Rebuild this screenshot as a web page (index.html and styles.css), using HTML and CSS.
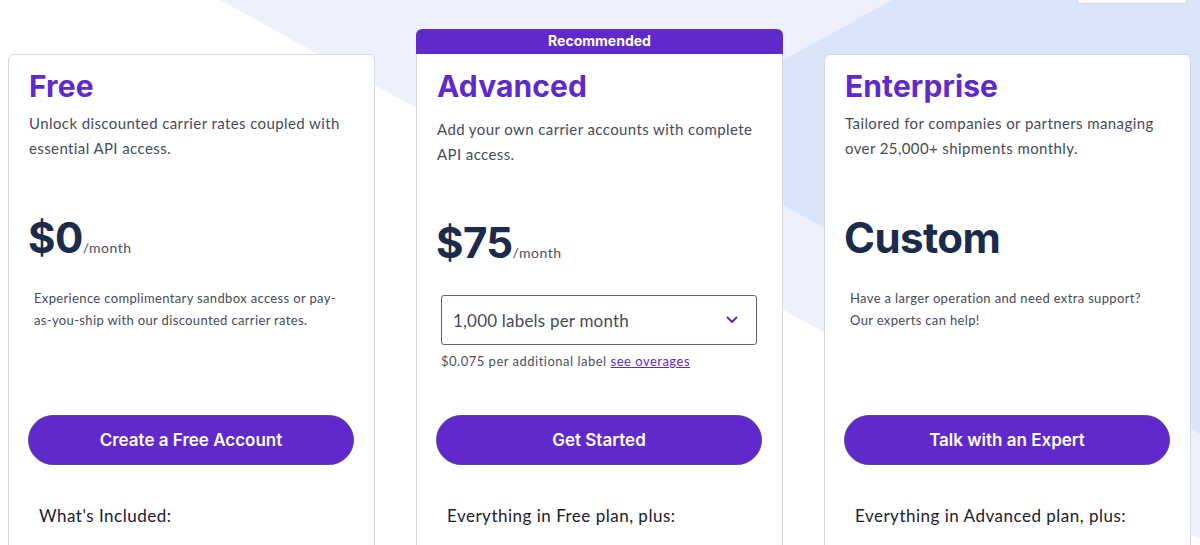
FILE: index.html
```html
<!DOCTYPE html>
<html lang="en">

<head>
    <meta charset="UTF-8">
    <meta name="viewport" content="width=device-width, initial-scale=1.0">
    <title>Pricing</title>
    <link rel="stylesheet" href="styles.css">
</head>

<body>
    <div class="page">
        <!-- Decorative background shapes -->
        <svg class="backdrop" viewBox="0 0 1200 545" preserveAspectRatio="none" aria-hidden="true">
            <polygon points="220,0 1200,0 1200,539" fill="#eef1fc" />
            <polygon points="651,133 892,0 1200,0 1200,434" fill="#dbe5fa" />
        </svg>

        <div class="topbar">
            <div class="topbar-box"></div>
        </div>

        <div class="plans">
            <!-- Free -->
            <div class="plan">
                <div class="plan-card">
                    <h2 class="plan-name">Free</h2>
                    <p class="plan-desc">Unlock discounted carrier rates coupled with essential API access.</p>
                    <div class="plan-price">
                        <span class="amount">$0</span><span class="period">/month</span>
                    </div>
                    <div class="plan-details">
                        <p class="plan-note">Experience complimentary sandbox access or pay-as-you-ship with our discounted carrier rates.</p>
                    </div>
                    <a class="plan-btn" href="#">Create a Free Account</a>
                    <h3 class="plan-includes">What's Included:</h3>
                </div>
            </div>

            <!-- Advanced -->
            <div class="plan plan-featured">
                <div class="plan-ribbon">Recommended</div>
                <div class="plan-card">
                    <h2 class="plan-name">Advanced</h2>
                    <p class="plan-desc">Add your own carrier accounts with complete API access.</p>
                    <div class="plan-price">
                        <span class="amount">$75</span><span class="period">/month</span>
                    </div>
                    <div class="plan-details">
                        <div class="volume-select">
                            <span>1,000 labels per month</span>
                            <svg class="chevron" viewBox="0 0 12 8" width="12" height="8">
                                <path d="M1.5 1.5 L6 6 L10.5 1.5" fill="none" stroke="#6029cc" stroke-width="2" stroke-linecap="round" stroke-linejoin="round" />
                            </svg>
                        </div>
                        <p class="overage">$0.075 per additional label <a href="#">see overages</a></p>
                    </div>
                    <a class="plan-btn" href="#">Get Started</a>
                    <h3 class="plan-includes">Everything in Free plan, plus:</h3>
                </div>
            </div>

            <!-- Enterprise -->
            <div class="plan">
                <div class="plan-card">
                    <h2 class="plan-name">Enterprise</h2>
                    <p class="plan-desc">Tailored for companies or partners managing over 25,000+ shipments monthly.</p>
                    <div class="plan-price">
                        <span class="amount">Custom</span>
                    </div>
                    <div class="plan-details">
                        <p class="plan-note">Have a larger operation and need extra support? Our experts can help!</p>
                    </div>
                    <a class="plan-btn" href="#">Talk with an Expert</a>
                    <h3 class="plan-includes">Everything in Advanced plan, plus:</h3>
                </div>
            </div>
        </div>
    </div>
</body>

</html>
```

FILE: styles.css
```css
body {
    margin: 0;
    background: #fff;
    font-family: Lato, "Noto Sans", sans-serif;
    color: #454b5a;
    overflow: hidden;
}

.page {
    position: relative;
    height: 545px;
}

/* Background decoration sits behind everything */
.backdrop {
    position: absolute;
    top: 0;
    left: 0;
    width: 1200px;
    height: 545px;
    z-index: 0;
}

.topbar {
    position: relative;
    z-index: 1;
    height: 4px;
    display: flex;
    justify-content: flex-end;
    padding-right: 13px;
}

.topbar-box {
    width: 108px;
    height: 3px;
    background: #fff;
    border: 1px solid #d6d9e0;
    border-top: none;
    border-radius: 0 0 3px 3px;
}

.plans {
    position: relative;
    z-index: 1;
    display: flex;
    gap: 41px;
    padding: 25px 0 0 8px;
}

.plan {
    flex: 0 0 367px;
    display: flex;
    flex-direction: column;
}

.plan-card {
    margin-top: 25px;
    background: #fff;
    border: 1px solid #d5d8e0;
    border-radius: 6px;
    padding: 14px 20px 40px 19px;
}

/* Recommended plan */
.plan-ribbon {
    height: 25px;
    line-height: 24px;
    background: #6029cc;
    color: #fff;
    text-align: center;
    font-family: Inter, sans-serif;
    font-weight: 700;
    font-size: 14px;
    border-radius: 6px 6px 0 0;
}

.plan-featured .plan-card {
    margin-top: 0;
    border-top: none;
    border-radius: 0 0 6px 6px;
    padding-top: 15px;
}

.plan-name {
    margin: -1px 0 0 1px;
    font-family: Inter, sans-serif;
    font-size: 30px;
    line-height: 36px;
    font-weight: 700;
    color: #6029cc;
    letter-spacing: 0.1px;
}

.plan-desc {
    margin: 7px 0 0 1px;
    font-size: 15px;
    line-height: 25px;
    letter-spacing: 0.4px;
}

.plan-featured .plan-desc {
    margin-top: 13px;
}

.plan-price {
    margin-top: 52px;
    height: 50px;
    display: flex;
    align-items: baseline;
}

.plan-featured .plan-price {
    margin-top: 51px;
}

.amount {
    font-family: Inter, sans-serif;
    font-size: 42px;
    line-height: 50px;
    font-weight: 700;
    color: #1a2b4c;
    letter-spacing: -0.6px;
}

.period {
    font-size: 14px;
    color: #4a5060;
    letter-spacing: 0.5px;
}

.plan-details {
    margin-top: 24px;
    height: 128px;
}

.plan-featured .plan-details {
    margin-top: 27px;
    height: 120px;
}

.plan-note {
    margin: 0 5px 0 6px;
    font-size: 13px;
    line-height: 22px;
    letter-spacing: 0.35px;
}

.volume-select {
    margin: 0 5px;
    height: 48px;
    border: 1px solid #5f6470;
    border-radius: 3px;
    display: flex;
    align-items: center;
    justify-content: space-between;
    padding: 0 18px 0 11px;
    font-size: 17px;
    letter-spacing: 0.2px;
}

.chevron {
    display: block;
}

.overage {
    margin: 7px 0 0 5px;
    font-size: 13px;
    line-height: 18px;
    letter-spacing: 0.5px;
    color: #4a5060;
}

.overage a {
    color: #6029cc;
}

.plan-btn {
    display: block;
    height: 48px;
    line-height: 48px;
    border: 1px solid #5b4a8a;
    border-radius: 25px;
    background: #6029cc;
    color: #fff;
    text-align: center;
    text-decoration: none;
    font-family: Inter, sans-serif;
    font-size: 17px;
    font-weight: 600;
}

.plan-includes {
    margin: 39px 0 0 11px;
    font-size: 17px;
    line-height: 24px;
    font-weight: 400;
    letter-spacing: 0.5px;
    color: #1b2030;
}
```
